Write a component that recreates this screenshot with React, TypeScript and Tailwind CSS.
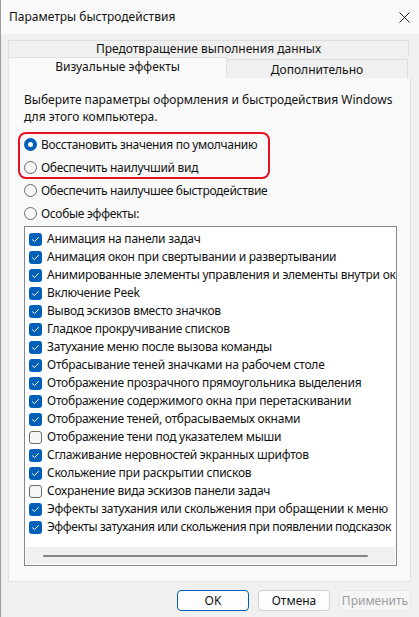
const items: { label: string; checked: boolean; tight?: boolean }[] = [
  { label: 'Анимация на панели задач', checked: true },
  { label: 'Анимация окон при свертывании и развертывании', checked: true },
  { label: 'Анимированные элементы управления и элементы внутри окна', checked: true },
  { label: 'Включение Peek', checked: true },
  { label: 'Вывод эскизов вместо значков', checked: true },
  { label: 'Гладкое прокручивание списков', checked: true },
  { label: 'Затухание меню после вызова команды', checked: true },
  { label: 'Отбрасывание теней значками на рабочем столе', checked: true },
  { label: 'Отображение прозрачного прямоугольника выделения', checked: true },
  { label: 'Отображение содержимого окна при перетаскивании', checked: true },
  { label: 'Отображение теней, отбрасываемых окнами', checked: true },
  { label: 'Отображение тени под указателем мыши', checked: false },
  { label: 'Сглаживание неровностей экранных шрифтов', checked: true },
  { label: 'Скольжение при раскрытии списков', checked: true },
  { label: 'Сохранение вида эскизов панели задач', checked: false },
  { label: 'Эффекты затухания или скольжения при обращении к меню', checked: true },
  { label: 'Эффекты затухания или скольжения при появлении подсказок', checked: true, tight: true },
]

function Radio({ label, selected }: { label: string; selected?: boolean }) {
  return (
    <div className="flex h-[23px] items-center">
      {selected ? (
        <span className="flex h-[13px] w-[13px] items-center justify-center rounded-full bg-[#005fb8]">
          <span className="h-[5px] w-[5px] rounded-full bg-white" />
        </span>
      ) : (
        <span className="h-[13px] w-[13px] rounded-full border border-[#6b6b6b] bg-[#f6f6f6]" />
      )}
      <span className="ml-[4px] tracking-[-0.3px]">{label}</span>
    </div>
  )
}

function Checkbox({ checked }: { checked: boolean }) {
  if (!checked) {
    return <span className="h-[13px] w-[13px] shrink-0 rounded-[3px] border border-[#6b6b6b] bg-[#f6f6f6]" />
  }
  return (
    <span className="flex h-[13px] w-[13px] shrink-0 items-center justify-center rounded-[3px] bg-[#005fb8]">
      <svg width="9" height="9" viewBox="0 0 9 9" fill="none">
        <path d="M1.5 4.8L3.4 6.6L7.5 2.4" stroke="white" strokeWidth="1" strokeLinecap="round" strokeLinejoin="round" />
      </svg>
    </span>
  )
}

export default function App() {
  return (
    <div
      className="flex h-[617px] w-[419px] flex-col overflow-hidden border-l border-[#9a9a9a] bg-[#f0f0f0] text-[12px] text-[#111]"
      style={{ fontFamily: '"Noto Sans", "Liberation Sans", sans-serif' }}
    >
      {/* заголовок окна */}
      <div className="flex h-[34px] shrink-0 items-center justify-between bg-[#f9f9f9] pl-[8px] pr-[8px]">
        <span className="text-[12px]">Параметры быстродействия</span>
        <svg width="11" height="11" viewBox="0 0 11 11" className="mr-[1px]">
          <path d="M0.5 0.5L10.5 10.5M10.5 0.5L0.5 10.5" stroke="#222" strokeWidth="1" />
        </svg>
      </div>

      <div className="mt-[6px] ml-[7px] w-[403px]">
        {/* вкладки */}
        <div className="flex h-[17px] w-[401px] items-end justify-center border border-b-0 border-[#dedede] bg-[#f0f0f0] leading-[16px]">
          Предотвращение выполнения данных
        </div>
        <div className="flex h-[21px] items-end">
          <div className="flex h-[21px] w-[219px] items-start justify-center border border-b-0 border-[#e2e2e2] bg-[#f9f9f9]">
            Визуальные эффекты
          </div>
          <div className="flex h-[19px] w-[181px] items-center justify-center border border-b-0 border-l-0 border-[#dedede] bg-[#f0f0f0] pt-[2px]">
            Дополнительно
          </div>
        </div>

        {/* содержимое вкладки */}
        <div className="h-[504px] border border-t-0 border-[#e2e2e2] bg-[#f9f9f9] pl-[15px] pt-[13px]">
          <p className="leading-[17px]">
            Выберите параметры оформления и быстродействия Windows
            <br />
            для этого компьютера.
          </p>

          <div className="relative mt-[8px]">
            <Radio label="Восстановить значения по умолчанию" selected />
            <Radio label="Обеспечить наилучший вид" />
            <Radio label="Обеспечить наилучшее быстродействие" />
            <Radio label="Особые эффекты:" />
            <div className="absolute left-[-6px] top-[-1px] h-[47px] w-[252px] rounded-[8px] border-2 border-[#e81123]" />
          </div>

          <div className="mt-[1px] flex h-[340px] w-[373px] flex-col border border-[#828790] bg-white">
            <div className="flex-1 overflow-hidden pt-[3px]">
              {items.map((item) => (
                <div key={item.label} className="flex h-[18px] items-center pl-[4px] whitespace-nowrap">
                  <Checkbox checked={item.checked} />
                  <span className={item.tight ? 'ml-[5px] tracking-[-0.42px]' : 'ml-[5px] tracking-[-0.25px]'}>
                    {item.label}
                  </span>
                </div>
              ))}
            </div>
            <div className="mx-[1px] mb-[1px] flex h-[17px] items-center bg-[#f0f0f0] pl-[17px]">
              <div className="h-[2px] w-[325px] rounded-full bg-[#858585]" />
            </div>
          </div>
        </div>
      </div>

      {/* кнопки */}
      <div className="mt-[8px] flex justify-end gap-[9px] pr-[8px]">
        <button className="h-[21px] w-[72px] rounded-[4px] border border-[#005fb8] bg-[#fdfdfd] text-[12px]">OK</button>
        <button className="h-[21px] w-[72px] rounded-[4px] border border-[#d0d0d0] bg-[#fdfdfd] text-[12px]">Отмена</button>
        <button className="h-[21px] w-[72px] rounded-[4px] border border-[#e8e8e8] bg-[#f5f5f5] text-[12px] text-[#9d9d9d]">
          Применить
        </button>
      </div>
    </div>
  )
}
